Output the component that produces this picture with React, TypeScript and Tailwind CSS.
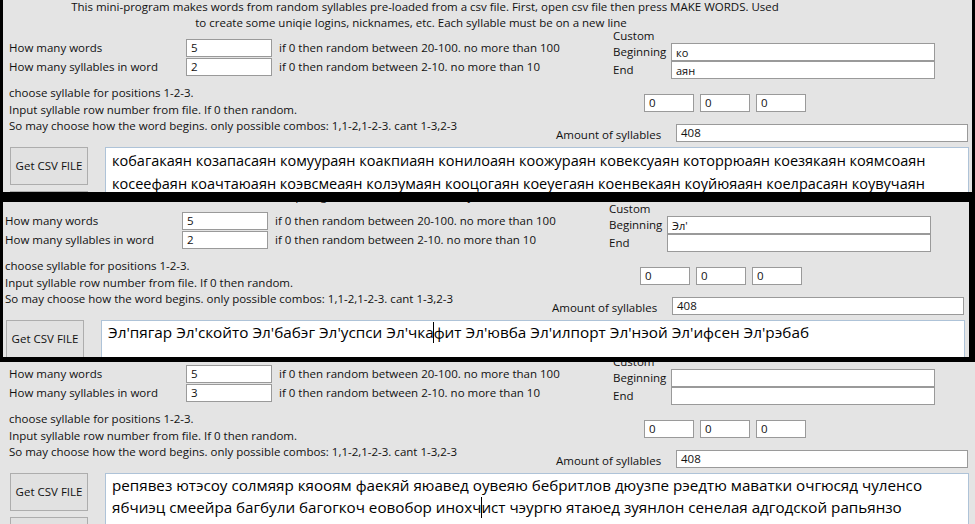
const ui = "font-['Open_Sans',_'Noto_Sans',_sans-serif]";

type FormData = {
  words: string;
  syllables: string;
  begin: string;
  end: string;
  outputText: string;
  lines: { before: string; after?: string }[];
};

function TextBox({ value, className }: { value: string; className: string }) {
  return (
    <div
      className={`flex h-[18px] items-center border border-[#9a9a9a] bg-white pl-[4px] text-[11.5px] leading-none ${className}`}
    >
      {value}
    </div>
  );
}

function Form({ data }: { data: FormData }) {
  return (
    <div className={`w-[975px] text-[11.5px] leading-[16px] text-[#111] ${ui}`}>
      {/* header */}
      <div className="h-[29px] w-[850px] text-center">
        <p className="-mt-[1px]">
          This mini-program makes words from random syllables pre-loaded from a csv file. First, open csv file then press
          MAKE WORDS. Used
        </p>
        <p className="pr-[28px]">
          to create some uniqie logins, nicknames, etc. Each syllable must be on a new line
        </p>
      </div>

      {/* counts + custom */}
      <div className="flex h-[51px]">
        <div className="w-[613px] pl-[9px] pt-[10px]">
          <div className="flex h-[19px] items-center">
            <span className="w-[177px]">How many words</span>
            <TextBox value={data.words} className="w-[86px]" />
            <span className="ml-[7px]">if 0 then random between 20-100. no more than 100</span>
          </div>
          <div className="flex h-[19px] items-center">
            <span className="w-[177px]">How many syllables in word</span>
            <TextBox value={data.syllables} className="w-[86px]" />
            <span className="ml-[7px]">if 0 then random between 2-10. no more than 10</span>
          </div>
        </div>
        <div className="flex flex-col">
          <span className="h-[15px] leading-[15px]">Custom</span>
          <div className="flex h-[18px] items-center">
            <span className="w-[58px]">Beginning</span>
            <TextBox value={data.begin} className="w-[264px] text-[11px]" />
          </div>
          <div className="flex h-[18px] items-center">
            <span className="w-[58px]">End</span>
            <TextBox value={data.end} className="w-[264px] text-[11px]" />
          </div>
        </div>
      </div>

      {/* positions */}
      <div className="flex h-[68px]">
        <div className="w-[556px] pl-[9px] pt-[6px] leading-[16.5px]">
          <p>choose syllable for positions 1-2-3.</p>
          <p>Input syllable row number from file. If 0 then random.</p>
          <p>So may choose how the word begins. only possible combos: 1,1-2,1-2-3. cant 1-3,2-3</p>
        </div>
        <div className="flex flex-col pt-[15px]">
          <div className="ml-[88px] flex gap-[6px]">
            <TextBox value="0" className="w-[50px]" />
            <TextBox value="0" className="w-[50px]" />
            <TextBox value="0" className="w-[50px]" />
          </div>
          <div className="mt-[12px] flex">
            <span className="w-[120px] pt-[3px]">Amount of syllables</span>
            <TextBox value="408" className="w-[292px]" />
          </div>
        </div>
      </div>

      {/* output */}
      <div className="flex">
        <div className="ml-[10px] flex w-[78px] flex-col gap-[6px]">
          <button className="h-[38px] border border-[#adadad] bg-[#e1e1e1] text-[11.5px] text-[#111]">
            Get CSV FILE
          </button>
          <button className="h-[38px] border border-[#adadad] bg-[#e1e1e1]" />
        </div>
        <div
          className={`ml-[17px] h-[90px] w-[864px] border border-[#aec3d8] bg-white pl-[6px] text-black ${data.outputText}`}
        >
          {data.lines.map((line, i) => (
            <p key={i} className="whitespace-nowrap">
              {line.before}
              {line.after !== undefined && (
                <>
                  <span className="-mx-[0.5px] inline-block h-[21px] w-px bg-black align-[-5px]" />
                  {line.after}
                </>
              )}
            </p>
          ))}
        </div>
      </div>
    </div>
  );
}

const first: FormData = {
  words: "5",
  syllables: "2",
  begin: "ко",
  end: "аян",
  outputText: "text-[14.5px] leading-[23px] pt-[1px]",
  lines: [
    {
      before:
        "кобагакаян козапасаян комуураян коакпиаян конилоаян коожураян ковексуаян которрюаян коезякаян коямсоаян",
    },
    {
      before:
        "косеефаян коачтаюаян коэвсмеаян колэумаян кооцогаян коеуегаян коенвекаян коуйюяаян коелрасаян коувучаян",
    },
  ],
};

const second: FormData = {
  words: "5",
  syllables: "2",
  begin: "Эл'",
  end: "",
  outputText: "text-[15.3px] leading-[22px] pt-0",
  lines: [
    {
      before: "Эл'пягар Эл'скойто Эл'бабэг Эл'успси Эл'чка",
      after: "фит Эл'ювба Эл'илпорт Эл'нэой Эл'ифсен Эл'рэбаб",
    },
  ],
};

const third: FormData = {
  words: "5",
  syllables: "3",
  begin: "",
  end: "",
  outputText: "text-[15.2px] leading-[22px] pt-0",
  lines: [
    {
      before:
        "репявез ютэсоу солмяяр кяооям фаекяй яюавед оувеяю бебритлов дюузпе рэедтю маватки очгюсяд чуленсо",
    },
    {
      before: "ябчиэц смеейра багбули багогкоч еовобор инохч",
      after: "ист чэургю ятаюед зуянлон сенелая адгодской рапьянзо",
    },
  ],
};

export default function App() {
  return (
    <div className="flex h-[524px] w-[975px] flex-col overflow-hidden bg-black">
      <div className="h-[192px] shrink-0 overflow-hidden bg-[#e4e4e4] shadow-[inset_3px_0_0_#000,inset_-3px_0_0_#000]">
        <Form data={first} />
      </div>
      <div className="mt-[10px] h-[155px] shrink-0 overflow-hidden bg-[#e4e4e4] shadow-[inset_3px_0_0_#000,inset_-6px_0_0_#000]">
        <div className="-ml-[4px] -mt-[30px]">
          <Form data={second} />
        </div>
      </div>
      <div className="mt-[5px] h-[162px] shrink-0 overflow-hidden bg-[#e4e4e4]">
        <div className="-mt-[37px]">
          <Form data={third} />
        </div>
      </div>
    </div>
  );
}
